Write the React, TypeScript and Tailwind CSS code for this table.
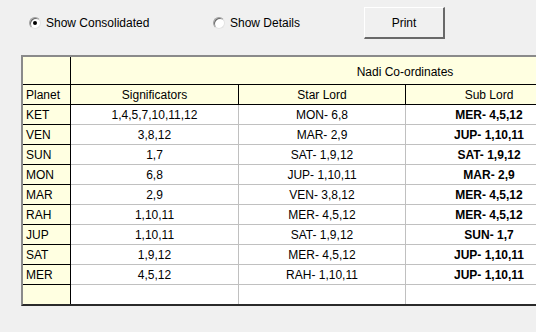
import React from "react";

type Row = { planet: string; sig: string; star: string; sub: string };

const ROWS: Row[] = [
  { planet: "KET", sig: "1,4,5,7,10,11,12", star: "MON- 6,8", sub: "MER- 4,5,12" },
  { planet: "VEN", sig: "3,8,12", star: "MAR- 2,9", sub: "JUP- 1,10,11" },
  { planet: "SUN", sig: "1,7", star: "SAT- 1,9,12", sub: "SAT- 1,9,12" },
  { planet: "MON", sig: "6,8", star: "JUP- 1,10,11", sub: "MAR- 2,9" },
  { planet: "MAR", sig: "2,9", star: "VEN- 3,8,12", sub: "MER- 4,5,12" },
  { planet: "RAH", sig: "1,10,11", star: "MER- 4,5,12", sub: "MER- 4,5,12" },
  { planet: "JUP", sig: "1,10,11", star: "SAT- 1,9,12", sub: "SUN- 1,7" },
  { planet: "SAT", sig: "1,9,12", star: "MER- 4,5,12", sub: "JUP- 1,10,11" },
  { planet: "MER", sig: "4,5,12", star: "RAH- 1,10,11", sub: "JUP- 1,10,11" },
];

function Radio({ checked, label }: { checked: boolean; label: string }) {
  return (
    <div className="flex items-center gap-[5px]">
      <div className="w-[12px] h-[12px] rounded-full bg-white border border-t-[#a0a0a0] border-l-[#a0a0a0] border-b-[#e3e3e3] border-r-[#e3e3e3] flex items-center justify-center shadow-[inset_1px_1px_0_#696969]">
        {checked && <div className="w-[4px] h-[4px] rounded-full bg-black" />}
      </div>
      <span className="text-[12px] text-black leading-none">{label}</span>
    </div>
  );
}

export default function App() {
  return (
    <div
      className="w-[536px] h-[332px] bg-[#f0f0f0] overflow-hidden"
      style={{ fontFamily: '"Liberation Sans", Arial, sans-serif' }}
    >
      {/* Top options bar */}
      <div className="h-[55px] flex items-start pt-[7px]">
        <div className="h-[32px] flex items-center pl-[29px] w-[213px]">
          <Radio checked label="Show Consolidated" />
        </div>
        <div className="h-[32px] flex items-center w-[151px]">
          <Radio checked={false} label="Show Details" />
        </div>
        <button className="w-[81px] h-[32px] bg-[#f0f0f0] border-t border-l border-t-white border-l-white border-b-2 border-r-2 border-b-[#696969] border-r-[#696969] text-[12px] text-black">
          Print
        </button>
      </div>

      {/* Grid */}
      <div className="ml-[21px] w-[780px] border-t-2 border-l-2 border-t-[#8a8a8a] border-l-[#8a8a8a] border-b-2 border-b-[#2a2a2a] text-[12px] text-black">
        {/* Header row 1 */}
        <div className="flex h-[28px]">
          <div className="w-[48px] shrink-0 bg-[#ffffe1] border-r border-b border-black" />
          <div className="w-[669px] shrink-0 bg-[#ffffe1] border-r border-b border-black flex items-center justify-center pt-[2px]">
            Nadi Co-ordinates
          </div>
        </div>
        {/* Header row 2 */}
        <div className="flex h-[20px]">
          <div className="w-[48px] shrink-0 bg-[#ffffe1] border-r border-b border-black flex items-center pl-[3px]">
            Planet
          </div>
          <div className="w-[168px] shrink-0 bg-[#ffffe1] border-r border-b border-black flex items-center justify-center">
            Significators
          </div>
          <div className="w-[167px] shrink-0 bg-[#ffffe1] border-r border-b border-black flex items-center justify-center">
            Star Lord
          </div>
          <div className="w-[167px] shrink-0 bg-[#ffffe1] border-r border-b border-black flex items-center justify-center">
            Sub Lord
          </div>
          <div className="w-[167px] shrink-0 bg-[#ffffe1] border-r border-b border-black" />
        </div>
        {/* Data rows */}
        {ROWS.map((r) => (
          <div key={r.planet} className="flex h-[20px]">
            <div className="w-[48px] shrink-0 bg-[#ffffe1] border-r border-b border-black flex items-center pl-[3px]">
              {r.planet}
            </div>
            <div className="w-[168px] shrink-0 bg-white border-r border-b border-[#c0c0c0] flex items-center justify-center">
              {r.sig}
            </div>
            <div className="w-[167px] shrink-0 bg-white border-r border-b border-[#c0c0c0] flex items-center justify-center">
              {r.star}
            </div>
            <div className="w-[167px] shrink-0 bg-white border-r border-b border-[#c0c0c0] flex items-center justify-center font-bold">
              {r.sub}
            </div>
            <div className="w-[167px] shrink-0 bg-white border-r border-b border-[#c0c0c0]" />
          </div>
        ))}
        {/* Empty row */}
        <div className="flex h-[19px]">
          <div className="w-[48px] shrink-0 bg-[#ffffe1] border-r border-black" />
          <div className="w-[168px] shrink-0 bg-white border-r border-[#c0c0c0]" />
          <div className="w-[167px] shrink-0 bg-white border-r border-[#c0c0c0]" />
          <div className="w-[167px] shrink-0 bg-white border-r border-[#c0c0c0]" />
          <div className="w-[167px] shrink-0 bg-white border-r border-[#c0c0c0]" />
        </div>
      </div>
    </div>
  );
}
